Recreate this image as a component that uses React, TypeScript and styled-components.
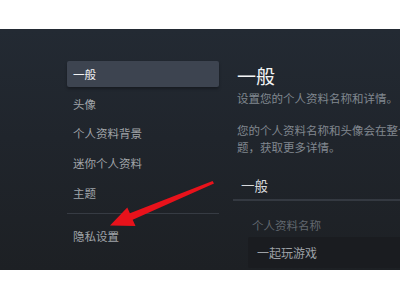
import React from "react";
import styled, { createGlobalStyle } from "styled-components";

const Global = createGlobalStyle`
  html, body { margin: 0; padding: 0; background: #ffffff; }
  body { font-family: "Noto Sans CJK SC", "Liberation Sans", sans-serif; }
`;

const Screen = styled.div`
  position: relative;
  width: 400px;
  height: 300px;
  padding-top: 29px;
  box-sizing: border-box;
  overflow: hidden;
  background: #ffffff;
`;

const Panel = styled.div`
  display: flex;
  height: 241px;
  overflow: hidden;
  background: linear-gradient(180deg, #232a33 0%, #20252c 45%, #1d2024 100%);
`;

const Sidebar = styled.nav`
  flex: 0 0 152px;
  margin-left: 67px;
  padding-top: 32px;
  display: flex;
  flex-direction: column;
`;

const NavItem = styled.div<{ $active?: boolean }>`
  height: 26px;
  line-height: 26px;
  padding: 0 6px;
  margin-bottom: 3.7px;
  font-size: 11.5px;
  border-radius: 2px;
  white-space: nowrap;
  color: ${(p) => (p.$active ? "#f2f3f4" : "#a0a4a9")};
  background: ${(p) => (p.$active ? "#3d4450" : "transparent")};
  box-shadow: ${(p) => (p.$active ? "0 2px 3px rgba(0,0,0,0.3)" : "none")};
`;

const Divider = styled.div`
  height: 1px;
  background: #363b43;
  margin: 4px 0 9px;
`;

const Main = styled.main`
  flex: 0 0 560px;
  margin-left: 14px;
  padding-top: 35px;
  display: flex;
  flex-direction: column;
`;

const Intro = styled.div`
  padding-left: 4px;
`;

const Title = styled.h1`
  margin: 0;
  font-size: 19px;
  line-height: 24px;
  font-weight: 400;
  color: #f4f5f6;
`;

const Subtitle = styled.p`
  margin: 2px 0 0;
  font-size: 11.5px;
  line-height: 16px;
  color: #80878f;
`;

const Paragraph = styled.p`
  margin: 15.5px 0 0;
  font-size: 11.5px;
  line-height: 17px;
  color: #80878f;
  white-space: nowrap;
`;

const SectionHead = styled.div`
  margin-top: 19.5px;
  padding: 0 0 4px 8px;
  font-size: 13.5px;
  line-height: 20px;
  color: #d8dadd;
  border-bottom: 2px solid #343941;
`;

const SectionBody = styled.div`
  padding: 16px 0 0 15px;
  flex: 1;
`;

const FieldLabel = styled.div`
  padding-left: 4px;
  font-size: 11.5px;
  line-height: 16px;
  color: #62686f;
`;

const Input = styled.div`
  margin-top: 4px;
  height: 31px;
  line-height: 31px;
  padding-left: 9px;
  font-size: 12px;
  color: #9da1a6;
  background: #1a1c20;
  border-radius: 2px;
`;

const ArrowLayer = styled.svg`
  position: absolute;
  left: 0;
  top: 0;
  pointer-events: none;
`;

const items = ["一般", "头像", "个人资料背景", "迷你个人资料", "主题"];

export default function App() {
  return (
    <>
      <Global />
      <Screen>
        <Panel>
          <Sidebar>
            {items.map((t, i) => (
              <NavItem key={t} $active={i === 0}>
                {t}
              </NavItem>
            ))}
            <Divider />
            <NavItem>隐私设置</NavItem>
          </Sidebar>
          <Main>
            <Intro>
              <Title>一般</Title>
              <Subtitle>设置您的个人资料名称和详情。</Subtitle>
              <Paragraph>
                您的个人资料名称和头像会在整个 Steam 中代表您。查看个人资料隐私主
                <br />
                题，获取更多详情。
              </Paragraph>
            </Intro>
            <SectionHead>一般</SectionHead>
            <SectionBody>
              <FieldLabel>个人资料名称</FieldLabel>
              <Input>一起玩游戏</Input>
            </SectionBody>
          </Main>
        </Panel>
        <ArrowLayer width="400" height="300" viewBox="0 0 400 300">
          <polygon
            points="212.6,181.1 214,183.4 132.7,219.7 135.5,226 110,225.5 127.3,207.6 129.9,213.3"
            fill="#e8121b"
          />
        </ArrowLayer>
      </Screen>
    </>
  );
}
